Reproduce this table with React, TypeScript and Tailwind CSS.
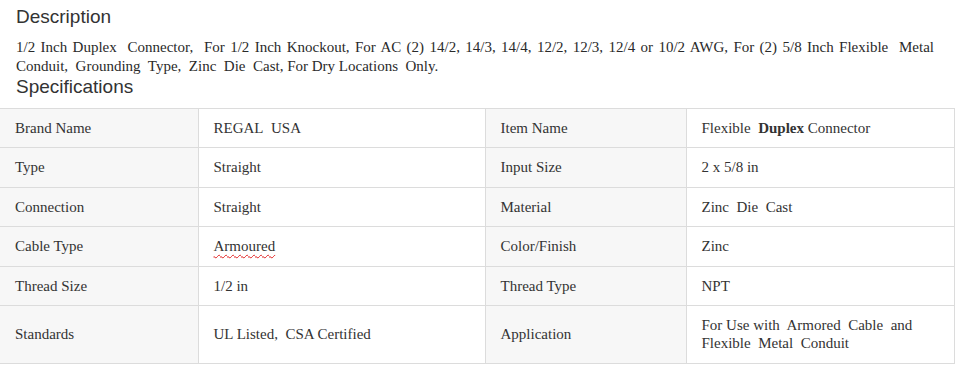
import React from 'react';

interface Row {
  label1: string;
  value1: React.ReactNode;
  label2: string;
  value2: React.ReactNode;
}

const rows: Row[] = [
  {
    label1: 'Brand Name',
    value1: 'REGAL\u00a0 USA',
    label2: 'Item Name',
    value2: (
      <>
        Flexible&nbsp; <b>Duplex</b> Connector
      </>
    ),
  },
  { label1: 'Type', value1: 'Straight', label2: 'Input Size', value2: '2 x 5/8 in' },
  { label1: 'Connection', value1: 'Straight', label2: 'Material', value2: 'Zinc\u00a0 Die\u00a0 Cast' },
  {
    label1: 'Cable Type',
    value1: (
      <span className="underline decoration-wavy decoration-[#e02020] decoration-1 underline-offset-[3px]">
        Armoured
      </span>
    ),
    label2: 'Color/Finish',
    value2: 'Zinc',
  },
  { label1: 'Thread Size', value1: '1/2 in', label2: 'Thread Type', value2: 'NPT' },
  {
    label1: 'Standards',
    value1: 'UL Listed,\u00a0 CSA Certified',
    label2: 'Application',
    value2: (
      <>
        For Use with&nbsp; Armored&nbsp; Cable&nbsp; and
        <br />
        Flexible&nbsp; Metal&nbsp; Conduit
      </>
    ),
  },
];

export default function App() {
  const serif = "font-['Liberation_Serif','Times_New_Roman',serif]";
  const label = `bg-[#f7f7f7] border-r border-b border-[#dcdcdc] px-[15px] py-[10px] align-middle`;
  const value = `bg-white border-r border-b border-[#dcdcdc] px-[15px] py-[10px] align-middle`;

  return (
    <div className="w-[960px] h-[367px] overflow-hidden bg-white text-[#2a2a2a]">
      {/* description */}
      <div className="pl-4 pr-[26px]">
        <h2 className="pt-[6px] text-[19px] leading-[22px] font-['Liberation_Sans',Arial,sans-serif] text-[#333]">
          Description
        </h2>
        <div className={`mt-[10px] text-[15px] leading-[19px] ${serif}`}>
          <p className="text-justify [text-align-last:justify]">
            1/2 Inch Duplex&nbsp; Connector,&nbsp; For 1/2 Inch Knockout, For AC (2) 14/2, 14/3, 14/4, 12/2, 12/3, 12/4 or 10/2 AWG, For (2) 5/8 Inch Flexible&nbsp; Metal
          </p>
          <p>
            Conduit,&nbsp; Grounding&nbsp; Type,&nbsp; Zinc&nbsp; Die&nbsp; Cast, For Dry Locations&nbsp; Only.
          </p>
        </div>
        <h2 className="text-[19px] leading-[22px] font-['Liberation_Sans',Arial,sans-serif] text-[#333]">
          Specifications
        </h2>
      </div>

      {/* table */}
      <table className={`mt-[10px] w-[954px] table-fixed border-collapse border-t border-[#dcdcdc] text-[15px] leading-[18.4px] text-[#333] ${serif}`}>
        <colgroup>
          <col className="w-[198px]" />
          <col className="w-[287px]" />
          <col className="w-[201px]" />
          <col className="w-[268px]" />
        </colgroup>
        <tbody>
          {rows.map((r) => (
            <tr key={r.label1}>
              <td className={label}>{r.label1}</td>
              <td className={value}>{r.value1}</td>
              <td className={label}>{r.label2}</td>
              <td className={value}>{r.value2}</td>
            </tr>
          ))}
        </tbody>
      </table>
    </div>
  );
}
